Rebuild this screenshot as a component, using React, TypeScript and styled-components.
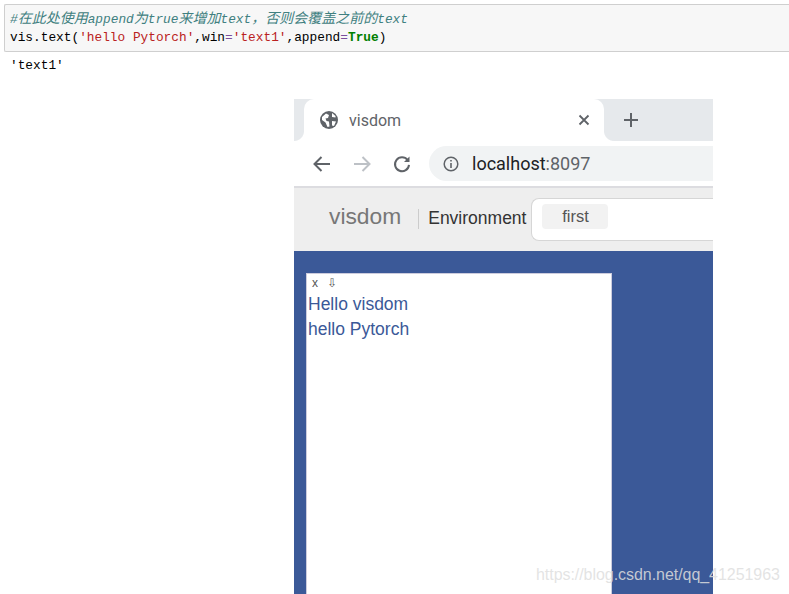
import { createGlobalStyle, styled } from 'styled-components';

const GlobalStyle = createGlobalStyle`
  html, body {
    margin: 0;
    padding: 0;
    background: #fff;
    overflow: hidden;
  }
`;

const Page = styled.div`
  position: relative;
  width: 789px;
  height: 594px;
  padding-top: 4px;
  box-sizing: border-box;
  overflow: hidden;
`;

const CodeCell = styled.div`
  margin-left: 4px;
  height: 48px;
  box-sizing: border-box;
  padding: 6px 0 0 5px;
  background: #f7f7f7;
  border: 1px solid #cfcfcf;
  border-right: none;
  border-radius: 2px 0 0 2px;
  font: 12.8px/17px 'Liberation Mono', 'Noto Sans CJK SC', monospace;
  color: #000;
  white-space: pre;
`;

const CodeLine = styled.div`
  height: 18px;
`;

const Comment = styled.span`
  color: #408080;
  font-style: italic;
`;

const CommentCjk = styled.span`
  font-size: 14px;
`;

const Str = styled.span`
  color: #ba2121;
`;

const Keyword = styled.span`
  color: #008000;
  font-weight: bold;
`;

const Op = styled.span`
  color: #7b4f9d;
`;

const Output = styled.div`
  margin: 6px 0 0 10px;
  height: 16px;
  font: 12.8px/16px 'Liberation Mono', monospace;
  color: #000;
`;

const Shot = styled.div`
  margin: 25px 0 0 294px;
  width: 419px;
  height: 495px;
  display: flex;
  flex-direction: column;
  overflow: hidden;
`;

const TabStrip = styled.div`
  display: flex;
  align-items: center;
  height: 42px;
  flex: none;
  background: #e6e9ec;
  padding-left: 10px;
`;

const Tab = styled.div`
  position: relative;
  display: flex;
  align-items: center;
  width: 300px;
  height: 42px;
  box-sizing: border-box;
  padding: 0 14px 0 16px;
  background: #fff;
  border-radius: 10px 10px 0 0;
  font: 16px 'Roboto', sans-serif;
  color: #5f6368;

  &::before,
  &::after {
    content: '';
    position: absolute;
    bottom: 0;
    width: 10px;
    height: 10px;
  }
  &::before {
    left: -10px;
    background: radial-gradient(circle at 0 0, #e6e9ec 9.5px, #fff 10.5px);
  }
  &::after {
    right: -10px;
    background: radial-gradient(circle at 100% 0, #e6e9ec 9.5px, #fff 10.5px);
  }
`;

const TabTitle = styled.span`
  margin-left: 11px;
  flex: 1;
`;

const NewTab = styled.div`
  display: flex;
  margin-left: 19px;
`;

const AddressRow = styled.div`
  display: flex;
  align-items: center;
  height: 47px;
  box-sizing: border-box;
  flex: none;
  padding-left: 18px;
  background: #fff;
  border-bottom: 2px solid #dcdce0;
`;

const NavIcon = styled.div`
  display: flex;
  margin-right: 20px;
`;

const UrlBar = styled.div`
  display: flex;
  align-items: center;
  flex: 1;
  height: 35px;
  margin-left: -3px;
  padding-left: 14px;
  background: #f1f3f4;
  border-radius: 18px 0 0 18px;
  font: 18px 'Roboto', sans-serif;
  color: #5f6368;
`;

const Host = styled.span`
  margin-left: 13px;
  color: #202124;
`;

const NavBar = styled.div`
  display: flex;
  align-items: center;
  height: 63px;
  flex: none;
  background: #eeeeee;
  padding-left: 35px;
  font-family: 'Liberation Sans', Arial, sans-serif;
`;

const Brand = styled.div`
  font-size: 22.8px;
  color: #777;
  padding-right: 17px;
  border-right: 1px solid #ccc;
  line-height: 20px;
  height: 20px;
  position: relative;
  top: -1px;

  & > span {
    position: relative;
    top: -3px;
  }
`;

const EnvLabel = styled.div`
  margin: -2px 0 0 9px;
  font-size: 17.5px;
  color: #333;
`;

const EnvSelect = styled.div`
  display: flex;
  align-items: center;
  flex: 1;
  height: 43px;
  margin-left: 5px;
  padding-left: 10px;
  box-sizing: border-box;
  background: #fff;
  border: 1px solid #d6d6d6;
  border-right: none;
  border-radius: 8px 0 0 8px;
`;

const EnvChip = styled.div`
  display: flex;
  align-items: center;
  justify-content: center;
  width: 66px;
  height: 25px;
  margin-top: -6px;
  background: #f2f2f2;
  border-radius: 4px;
  font-size: 16.5px;
  color: #555;
`;

const Canvas = styled.div`
  flex: 1;
  padding: 22px 0 0 12px;
  background: #3b5998;
`;

const Panel = styled.div`
  width: 306px;
  height: 100%;
  box-sizing: border-box;
  background: #fff;
  border: 1px solid #ccd;
  border-bottom: none;
  font-family: 'Liberation Sans', Arial, sans-serif;
`;

const PanelBar = styled.div`
  display: flex;
  align-items: center;
  gap: 9px;
  height: 18px;
  padding-left: 5px;
  font-size: 12px;
  color: #555;
`;

const PanelText = styled.div`
  padding-left: 1px;
  font-size: 17.5px;
  line-height: 25px;
  color: #3b5998;
`;

const Watermark = styled.div`
  position: absolute;
  left: 536px;
  top: 566px;
  font: 16px 'Liberation Sans', Arial, sans-serif;
  letter-spacing: -0.05px;
  color: rgba(222, 222, 222, 0.85);
  white-space: nowrap;
`;

function App() {
  return (
    <>
      <GlobalStyle />
      <Page>
        <CodeCell>
          <CodeLine>
            <Comment>
              #<CommentCjk>在此处使用</CommentCjk>append<CommentCjk>为</CommentCjk>true
              <CommentCjk>来增加</CommentCjk>text<CommentCjk>，否则会覆盖之前的</CommentCjk>text
            </Comment>
          </CodeLine>
          <CodeLine>
            vis.text(<Str>'hello Pytorch'</Str>,win<Op>=</Op><Str>'text1'</Str>,append<Op>=</Op>
            <Keyword>True</Keyword>)
          </CodeLine>
        </CodeCell>
        <Output>'text1'</Output>
        <Shot>
          <TabStrip>
            <Tab>
              <svg width="18" height="18" viewBox="0 0 18 18">
                <circle cx="9" cy="9" r="9" fill="#5f6368" />
                <path
                  d="M2 6 L6 2.5 L9 4 L8 7 L5.5 7.5 L6.5 10 L9 10.5 L9.5 15.5 L7.5 16 L5.5 11.5 L2 9 Z M12 2 L15.5 5 L15.5 6.5 L12 6 Z M12 10 L16 10.5 L14 15 L12 14.5 Z"
                  fill="#fff"
                />
              </svg>
              <TabTitle>visdom</TabTitle>
              <svg width="12" height="12" viewBox="0 0 12 12">
                <path d="M1.5 1.5 L10.5 10.5 M10.5 1.5 L1.5 10.5" stroke="#5f6368" strokeWidth="1.8" />
              </svg>
            </Tab>
            <NewTab>
              <svg width="16" height="16" viewBox="0 0 16 16">
                <path d="M8 1 V15 M1 8 H15" stroke="#5f6368" strokeWidth="2" />
              </svg>
            </NewTab>
          </TabStrip>
          <AddressRow>
            <NavIcon>
              <svg width="20" height="18" viewBox="0 0 20 18">
                <path d="M18 9 H3 M9.5 2 L2.5 9 L9.5 16" fill="none" stroke="#5f6368" strokeWidth="2" />
              </svg>
            </NavIcon>
            <NavIcon>
              <svg width="20" height="18" viewBox="0 0 20 18">
                <path d="M2 9 H17 M10.5 2 L17.5 9 L10.5 16" fill="none" stroke="#bdc1c6" strokeWidth="2" />
              </svg>
            </NavIcon>
            <NavIcon>
              <svg width="20" height="20" viewBox="0 0 20 20">
                <path d="M15.6 6 A7 7 0 1 0 17 10.8" fill="none" stroke="#5f6368" strokeWidth="2" />
                <path d="M17.5 2.5 V8 H12 Z" fill="#5f6368" />
              </svg>
            </NavIcon>
            <UrlBar>
              <svg width="16" height="16" viewBox="0 0 16 16">
                <circle cx="8" cy="8" r="6.8" fill="none" stroke="#5f6368" strokeWidth="1.5" />
                <path d="M8 7 V12 M8 4 V5.6" stroke="#5f6368" strokeWidth="1.6" />
              </svg>
              <Host>localhost</Host>:8097
            </UrlBar>
          </AddressRow>
          <NavBar>
            <Brand>
              <span>visdom</span>
            </Brand>
            <EnvLabel>Environment</EnvLabel>
            <EnvSelect>
              <EnvChip>first</EnvChip>
            </EnvSelect>
          </NavBar>
          <Canvas>
            <Panel>
              <PanelBar>
                <span>x</span>
                <span>⇩</span>
              </PanelBar>
              <PanelText>Hello visdom</PanelText>
              <PanelText>hello Pytorch</PanelText>
            </Panel>
          </Canvas>
        </Shot>
        <Watermark>https://blog.csdn.net/qq_41251963</Watermark>
      </Page>
    </>
  );
}

export default App;
